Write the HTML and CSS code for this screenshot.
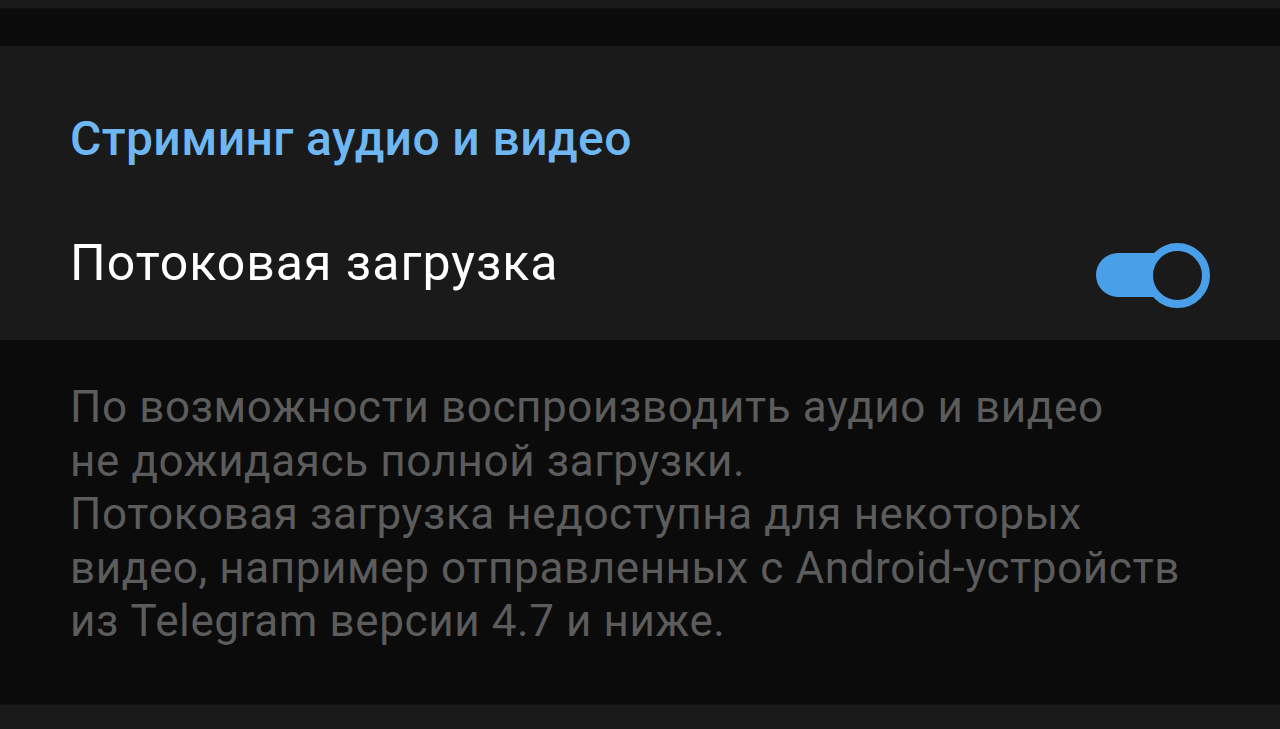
FILE: index.html
```html
<!DOCTYPE html>
<html lang="ru">
<head>
<meta charset="utf-8">
<title>Стриминг аудио и видео</title>
<link rel="stylesheet" href="styles.css">
</head>
<body>
<div class="top-strip"></div>
<section class="card">
  <h2 class="section-title">Стриминг аудио и видео</h2>
  <div class="setting-row">
    <span class="setting-label">Потоковая загрузка</span>
    <span class="toggle" role="switch" aria-checked="true">
      <span class="toggle-track"></span>
      <span class="toggle-knob"></span>
    </span>
  </div>
</section>
<p class="description">
  <span class="line">По возможности воспроизводить аудио и видео</span>
  <span class="line">не дожидаясь полной загрузки.</span>
  <span class="line">Потоковая загрузка недоступна для некоторых</span>
  <span class="line">видео, например отправленных с Android-устройств</span>
  <span class="line">из Telegram версии 4.7 и ниже.</span>
</p>
<div class="bottom-strip"></div>
</body>
</html>
```
FILE: styles.css
```css
html, body {
  margin: 0;
  padding: 0;
  background: #0b0b0b;
  font-family: Roboto, "Noto Sans", "Liberation Sans", sans-serif;
  overflow: hidden;
}

.top-strip {
  height: 8px;
  background: #1a1a1a;
  box-shadow: 0 1px 1px #111;
  margin-bottom: 38px;
}

.card {
  background: #1a1a1a;
  padding: 65px 70px 30px 70px;
  height: 294px;
  box-sizing: border-box;
}

.section-title {
  margin: 0;
  font-size: 48px;
  line-height: 56px;
  font-weight: 500;
  letter-spacing: 0.4px;
  color: #6fb7f2;
}

.setting-row {
  display: flex;
  justify-content: space-between;
  align-items: flex-start;
  margin-top: 68px;
}

.setting-label {
  font-size: 50px;
  line-height: 56px;
  letter-spacing: 1px;
  color: #ffffff;
}

.toggle {
  position: relative;
  display: block;
  width: 114px;
  height: 67px;
  margin-top: 8px;
}

.toggle-track {
  position: absolute;
  left: 0;
  top: 10px;
  width: 80px;
  height: 44px;
  border-radius: 22px;
  background: #4aa0e8;
}

.toggle-knob {
  position: absolute;
  right: 0;
  top: 0;
  width: 65px;
  height: 65px;
  box-sizing: border-box;
  border-radius: 50%;
  border: 8px solid #4aa0e8;
  background: #1a1a1a;
}

.description {
  margin: 0;
  padding: 41px 70px 56px 70px;
  font-size: 44px;
  line-height: 53.5px;
  letter-spacing: 0.6px;
  color: #5c5c5c;
}

.line {
  display: block;
  white-space: nowrap;
}

.bottom-strip {
  height: 24px;
  background: #1a1a1a;
  box-shadow: 0 -1px 1px #131313;
}
```
